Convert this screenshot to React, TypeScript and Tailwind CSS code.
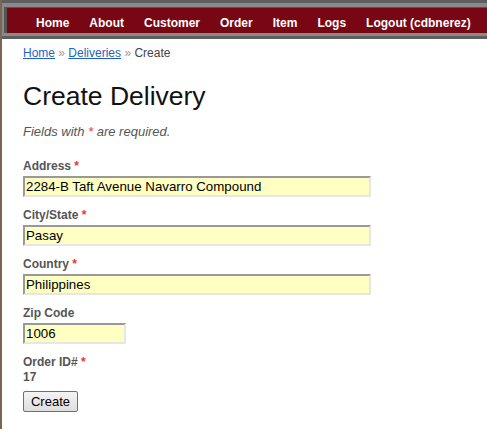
import React from "react";

const navItems = ["Home", "About", "Customer", "Order", "Item", "Logs", "Logout (cdbnerez)"];

function Field({ label, value, required, wide = true }: { label: string; value: string; required?: boolean; wide?: boolean }) {
  return (
    <div className="mb-[11px]">
      <div className="h-[15px] leading-[15px] text-[12px] font-bold text-[#555]">
        {label}
        {required && <span className="text-[#e33]"> *</span>}
      </div>
      <input
        readOnly
        value={value}
        className={`mt-[2px] block h-[21px] ${wide ? "w-[348px]" : "w-[103px]"} border-2 border-t-[#999] border-l-[#999] border-r-[#e6e6e6] border-b-[#e6e6e6] bg-[#ffffc2] px-[1px] text-[13.3px] leading-[17px] text-black outline-none`}
        style={{ fontFamily: '"Liberation Sans", Arial, sans-serif' }}
      />
    </div>
  );
}

export default function App() {
  return (
    <div
      className="flex h-[429px] w-[487px] overflow-hidden bg-white"
      style={{ fontFamily: '"Liberation Sans", Arial, sans-serif' }}
    >
      <div className="w-[2px] shrink-0 bg-[#7d6650]" />
      <div className="flex min-w-0 flex-1 flex-col">
        <div className="bg-[#5e5e5e] pt-[3px] pb-[3px]">
          <div className="bg-[#8a8a8a] pt-[4px] pb-[3px] pl-[2px]">
            <div className="flex h-[26px] items-center border-t-[1px] border-l-[3px] border-[#555] bg-[#780613] pl-[19px] pt-[6px]">
              {navItems.map((n) => (
                <span key={n} className="whitespace-nowrap px-[10px] text-[12px] font-bold leading-[15px] text-white">
                  {n}
                </span>
              ))}
            </div>
          </div>
        </div>

        <div className="pl-[21px]">
          <div className="mt-[6px] h-[16px] text-[12px] leading-[16px] text-[#444]">
            <a className="text-[#1f62c4] underline" href="#">Home</a>
            <span className="text-[#999]"> » </span>
            <a className="text-[#1f62c4] underline" href="#">Deliveries</a>
            <span className="text-[#999]"> » </span>
            <span>Create</span>
          </div>

          <h1 className="mt-[20px] h-[31px] text-[26.5px] font-normal leading-[31px] text-[#111]">Create Delivery</h1>

          <p className="mt-[12px] h-[16px] text-[13px] italic leading-[16px] text-[#555]">
            Fields with <span className="text-[#e33]">*</span> are required.
          </p>

          <div className="mt-[19px]">
            <Field label="Address" value="2284-B Taft Avenue Navarro Compound" required />
            <Field label="City/State" value="Pasay" required />
            <Field label="Country" value="Philippines" required />
            <Field label="Zip Code" value="1006" wide={false} />
          </div>

          <div className="mt-[1px] h-[15px] leading-[15px] text-[12px] font-bold text-[#555]">
            Order ID#<span className="text-[#e33]"> *</span>
          </div>
          <div className="h-[15px] leading-[15px] text-[12px] font-bold text-[#555]">17</div>

          <button
            className="mt-[6px] h-[21px] w-[55px] rounded-[2px] border border-[#707070] bg-gradient-to-b from-[#f4f4f4] to-[#dedede] text-[13px] leading-[17px] text-black"
            style={{ fontFamily: '"Liberation Sans", Arial, sans-serif' }}
          >
            Create
          </button>
        </div>
      </div>
    </div>
  );
}
